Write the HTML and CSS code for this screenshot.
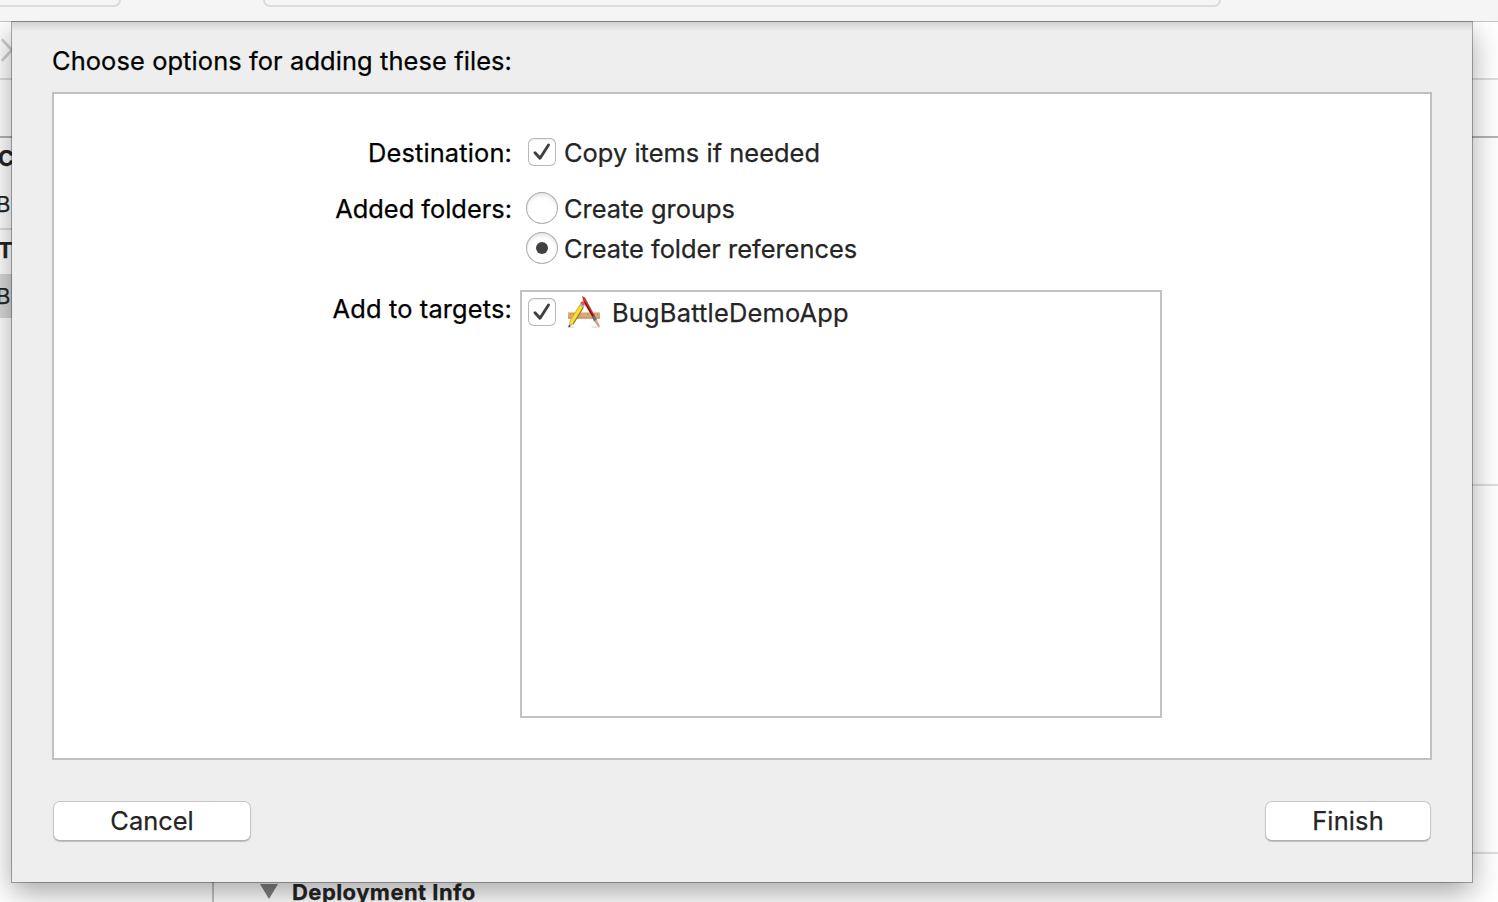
FILE: index.html
```html
<!DOCTYPE html>
<html lang="en">
<head>
<meta charset="utf-8">
<title>Add Files</title>
<link rel="stylesheet" href="styles.css">
</head>
<body>
<div class="window">
  <header class="toolbar">
    <div class="toolbar-left"></div>
    <div class="toolbar-status"></div>
  </header>
  <div class="jumpbar">
    <svg class="chevron" width="14" height="26" viewBox="0 0 14 26"><path d="M3.500 3 13 13 3.500 23" fill="none" stroke="#cecece" stroke-width="2.6" stroke-linecap="round"/></svg>
  </div>
  <div class="tabbar"></div>
  <div class="workspace">
    <aside class="sidebar">
      <div class="side-row strong side-project">C</div>
      <div class="side-row side-item">B</div>
      <div class="side-row strong side-targets">T</div>
      <div class="side-row side-item selected">B</div>
    </aside>
    <main class="editor">
      <div class="section identity"></div>
      <div class="section signing"></div>
      <div class="section deployment">
        <svg width="18" height="15" viewBox="0 0 18 15"><path d="M0 0H18L9 15Z" fill="#808080"/></svg>
        <span class="deployment-title">Deployment Info</span>
      </div>
    </main>
  </div>
</div>

<div class="sheet-layer">
  <div class="sheet">
    <div class="sheet-title"><span class="t-title">Choose options for adding these files:</span></div>
    <div class="panel">
      <div class="row row-destination">
        <div class="label"><span class="t-dest">Destination:</span></div>
        <div class="control">
          <span class="checkbox"><svg width="28" height="28" viewBox="0 0 28 28"><path d="M7 14.8 12 20.3 20.5 7" fill="none" stroke="#404040" stroke-width="2.9" stroke-linecap="round" stroke-linejoin="round"/></svg></span>
          <span class="t-copy">Copy items if needed</span>
        </div>
      </div>
      <div class="row row-folders">
        <div class="label"><span class="t-added">Added folders:</span></div>
        <div class="radios">
          <div class="control"><span class="radio"></span><span class="t-groups">Create groups</span></div>
          <div class="control"><span class="radio on"></span><span class="t-refs">Create folder references</span></div>
        </div>
      </div>
      <div class="row row-targets">
        <div class="label"><span class="t-targets">Add to targets:</span></div>
        <div class="targets">
          <div class="target">
            <span class="checkbox"><svg width="28" height="28" viewBox="0 0 28 28"><path d="M7 14.8 12 20.3 20.5 7" fill="none" stroke="#404040" stroke-width="2.9" stroke-linecap="round" stroke-linejoin="round"/></svg></span>
            <svg class="app-icon" width="34" height="32" viewBox="0 0 34 32">
              <rect x="1" y="16" width="32" height="6.5" fill="#dca779"/>
              <path d="M1 16.5H33" stroke="#efc8a4"/>
              <path d="M1 22H33" stroke="#bd8558"/>
              <path d="M3.500 17v2M6.500 17v2M20.500 17v2M27.500 17v2M30.500 17v2" stroke="#b9815a" stroke-width=".8"/>
              <ellipse cx="4" cy="31" rx="4" ry=".8" fill="#ddd"/>
              <ellipse cx="29" cy="31" rx="5" ry=".8" fill="#ddd"/>
              <path d="M15 0 18 1.500 28 20 25.500 21.500 16.500 6Z" fill="#c23a28"/>
              <path d="M17.500 6 26.500 21" stroke="#64150e" stroke-width="1.300"/>
              <path d="M25 21 27.800 19.500 30 24 27 25.500Z" fill="#667078"/>
              <path d="M27 25.200 30 24 33 30 31.500 31.200Z" fill="#d9a28c"/>
              <path d="M12.800 9 16.600 11.200 6 28.500 2.200 26Z" fill="#f6df3a"/>
              <path d="M16.300 11.500 6 28.300" stroke="#947410" stroke-width="1.200"/>
              <path d="M12.800 9 2.800 25.500" stroke="#cfa91c" stroke-width=".9"/>
              <path d="M13.300 8Q14 4.500 16.300 5.500T17.300 10Z" fill="#ef4c54"/>
              <path d="M12.800 8.500 17 11" stroke="#9bb0b5" stroke-width="1.500"/>
              <path d="M2.300 26 6 28.500 1.500 31.500Z" fill="#d8b77e"/>
              <path d="M1.900 28.800 1.500 31.500 3.700 30Z" fill="#333"/>
            </svg>
            <span class="t-app">BugBattleDemoApp</span>
          </div>
        </div>
      </div>
    </div>
    <div class="actions">
      <button class="btn cancel"><span class="t-cancel">Cancel</span></button>
      <button class="btn finish"><span class="t-finish">Finish</span></button>
    </div>
  </div>
</div>
</body>
</html>
```
FILE: styles.css
```css
* { box-sizing: border-box; }
html, body { margin: 0; height: 902px; overflow: hidden; background: #fff; }
body {
  position: relative;
  font-family: Inter, "Liberation Sans", sans-serif;
  font-size: 25.4px;
  line-height: 32px;
  color: #252525;
  white-space: nowrap;
  -webkit-text-stroke: .25px currentColor;
}

.window { height: 902px; display: flex; flex-direction: column; }
.toolbar {
  height: 22px;
  background: #f5f5f5;
  border-bottom: 1px solid #c6c6c6;
  display: flex;
  gap: 142px;
}
.toolbar-left, .toolbar-status { height: 7px; border: 2px solid #dcdcdc; border-top: 0; }
.toolbar-left { width: 121px; border-left: 0; border-radius: 0 0 10px 0; }
.toolbar-status { width: 958px; border-radius: 0 0 10px 10px; }
.jumpbar { height: 58px; border-bottom: 2px solid #dedede; padding-top: 15px; }
.chevron { display: block; margin-left: -1px; }
.tabbar { height: 58px; border-bottom: 2px solid #b4b4b4; }
.workspace { flex: 1; display: flex; min-height: 0; }
.sidebar { width: 214px; border-right: 2px solid #c3c3c3; font-size: 22px; }
.side-row { height: 44px; line-height: 44px; }
.strong { font-weight: 700; }
.side-project { margin-left: -2px; line-height: 40px; }
.side-item { height: 46px; text-indent: -4px; }
.side-targets { height: 46px; border-top: 2px solid #dedede; text-indent: -2px; line-height: 40px; }
.side-item.selected { height: 44px; background: #d8d8d8; }
.editor { flex: 1; display: flex; flex-direction: column; }
.section { border-bottom: 2px solid #dedede; }
.identity { height: 348px; }
.signing { height: 368px; }
.deployment { flex: 1; border: 0; display: flex; gap: 14px; padding: 30px 0 0 46px; font-size: 22px; font-weight: 700; }
.deployment-title { line-height: 16px; letter-spacing: .45px; }

.sheet-layer { position: absolute; left: 0; top: 21px; width: 1498px; height: 881px; overflow: hidden; padding: 1px 26px 0 12px; }
.sheet {
  height: 860px;
  padding: 23px 40px 0;
  background: linear-gradient(#d2d2d2, #dedede 4px, #e9e9e9 8px, #eee 9px);
  box-shadow: 0 0 0 1px rgba(0, 0, 0, .3), 0 10px 28px rgba(0, 0, 0, .36);
  display: flex;
  flex-direction: column;
  color: #000;
}
.sheet-title { height: 47px; }
.panel { height: 668px; background: #fff; border: 2px solid #c0c0c0; padding-top: 43px; display: flex; flex-direction: column; }
.row { display: flex; }
.label { width: 458px; text-align: right; flex: none; }
.control { display: flex; align-items: center; height: 32px; color: #252525; }
.row-destination { height: 55px; }
.row-destination .control { padding-left: 16px; gap: 8px; height: 30px; }
.row-folders { height: 98px; }
.row-folders .label { padding-top: 1px; }
.radios { display: flex; flex-direction: column; gap: 8px; padding-left: 14px; }
.radios .control { gap: 6px; }
.row-targets .label { padding-top: 3px; }
.checkbox {
  width: 28px; height: 28px; flex: none;
  border-radius: 6px;
  background: #fff;
  box-shadow: inset 0 0 0 1px #b8b8b8, inset 0 2px 2px rgba(0, 0, 0, .08);
}
.checkbox svg { display: block; }
.radio {
  width: 32px; height: 32px; flex: none;
  border-radius: 50%;
  box-shadow: inset 0 0 0 1px #b0b0b0, inset 0 3px 4px rgba(0, 0, 0, .12);
  display: flex; align-items: center; justify-content: center;
}
.radio.on::after { content: ""; width: 12px; height: 12px; border-radius: 50%; background: #404040; }
.targets { width: 642px; height: 428px; border: 2px solid #c3c3c3; margin-left: 8px; padding: 4px 6px; color: #252525; }
.target { display: flex; align-items: center; height: 32px; }
.app-icon { margin: 0 11px 0 11px; }
.t-copy, .t-groups, .t-refs, .t-app { padding-top: 2px; }

.t-title { letter-spacing: .11px; }
.t-dest { letter-spacing: .15px; }
.t-copy { letter-spacing: .04px; }
.t-targets { letter-spacing: .15px; }
.t-app { letter-spacing: .22px; }
.t-finish { letter-spacing: .15px; }

.actions { display: flex; justify-content: space-between; padding: 41px 0 0; margin: 0 1px; }
.btn {
  height: 40px; padding: 0;
  border: 1px solid #c8c8c8; border-bottom-color: #b0b0b0;
  border-radius: 7px;
  background: #fff;
  color: #252525;
  font: inherit;
  box-shadow: 0 1px 1px rgba(0, 0, 0, .2);
}
.cancel { width: 198px; }
.finish { width: 166px; }
```
